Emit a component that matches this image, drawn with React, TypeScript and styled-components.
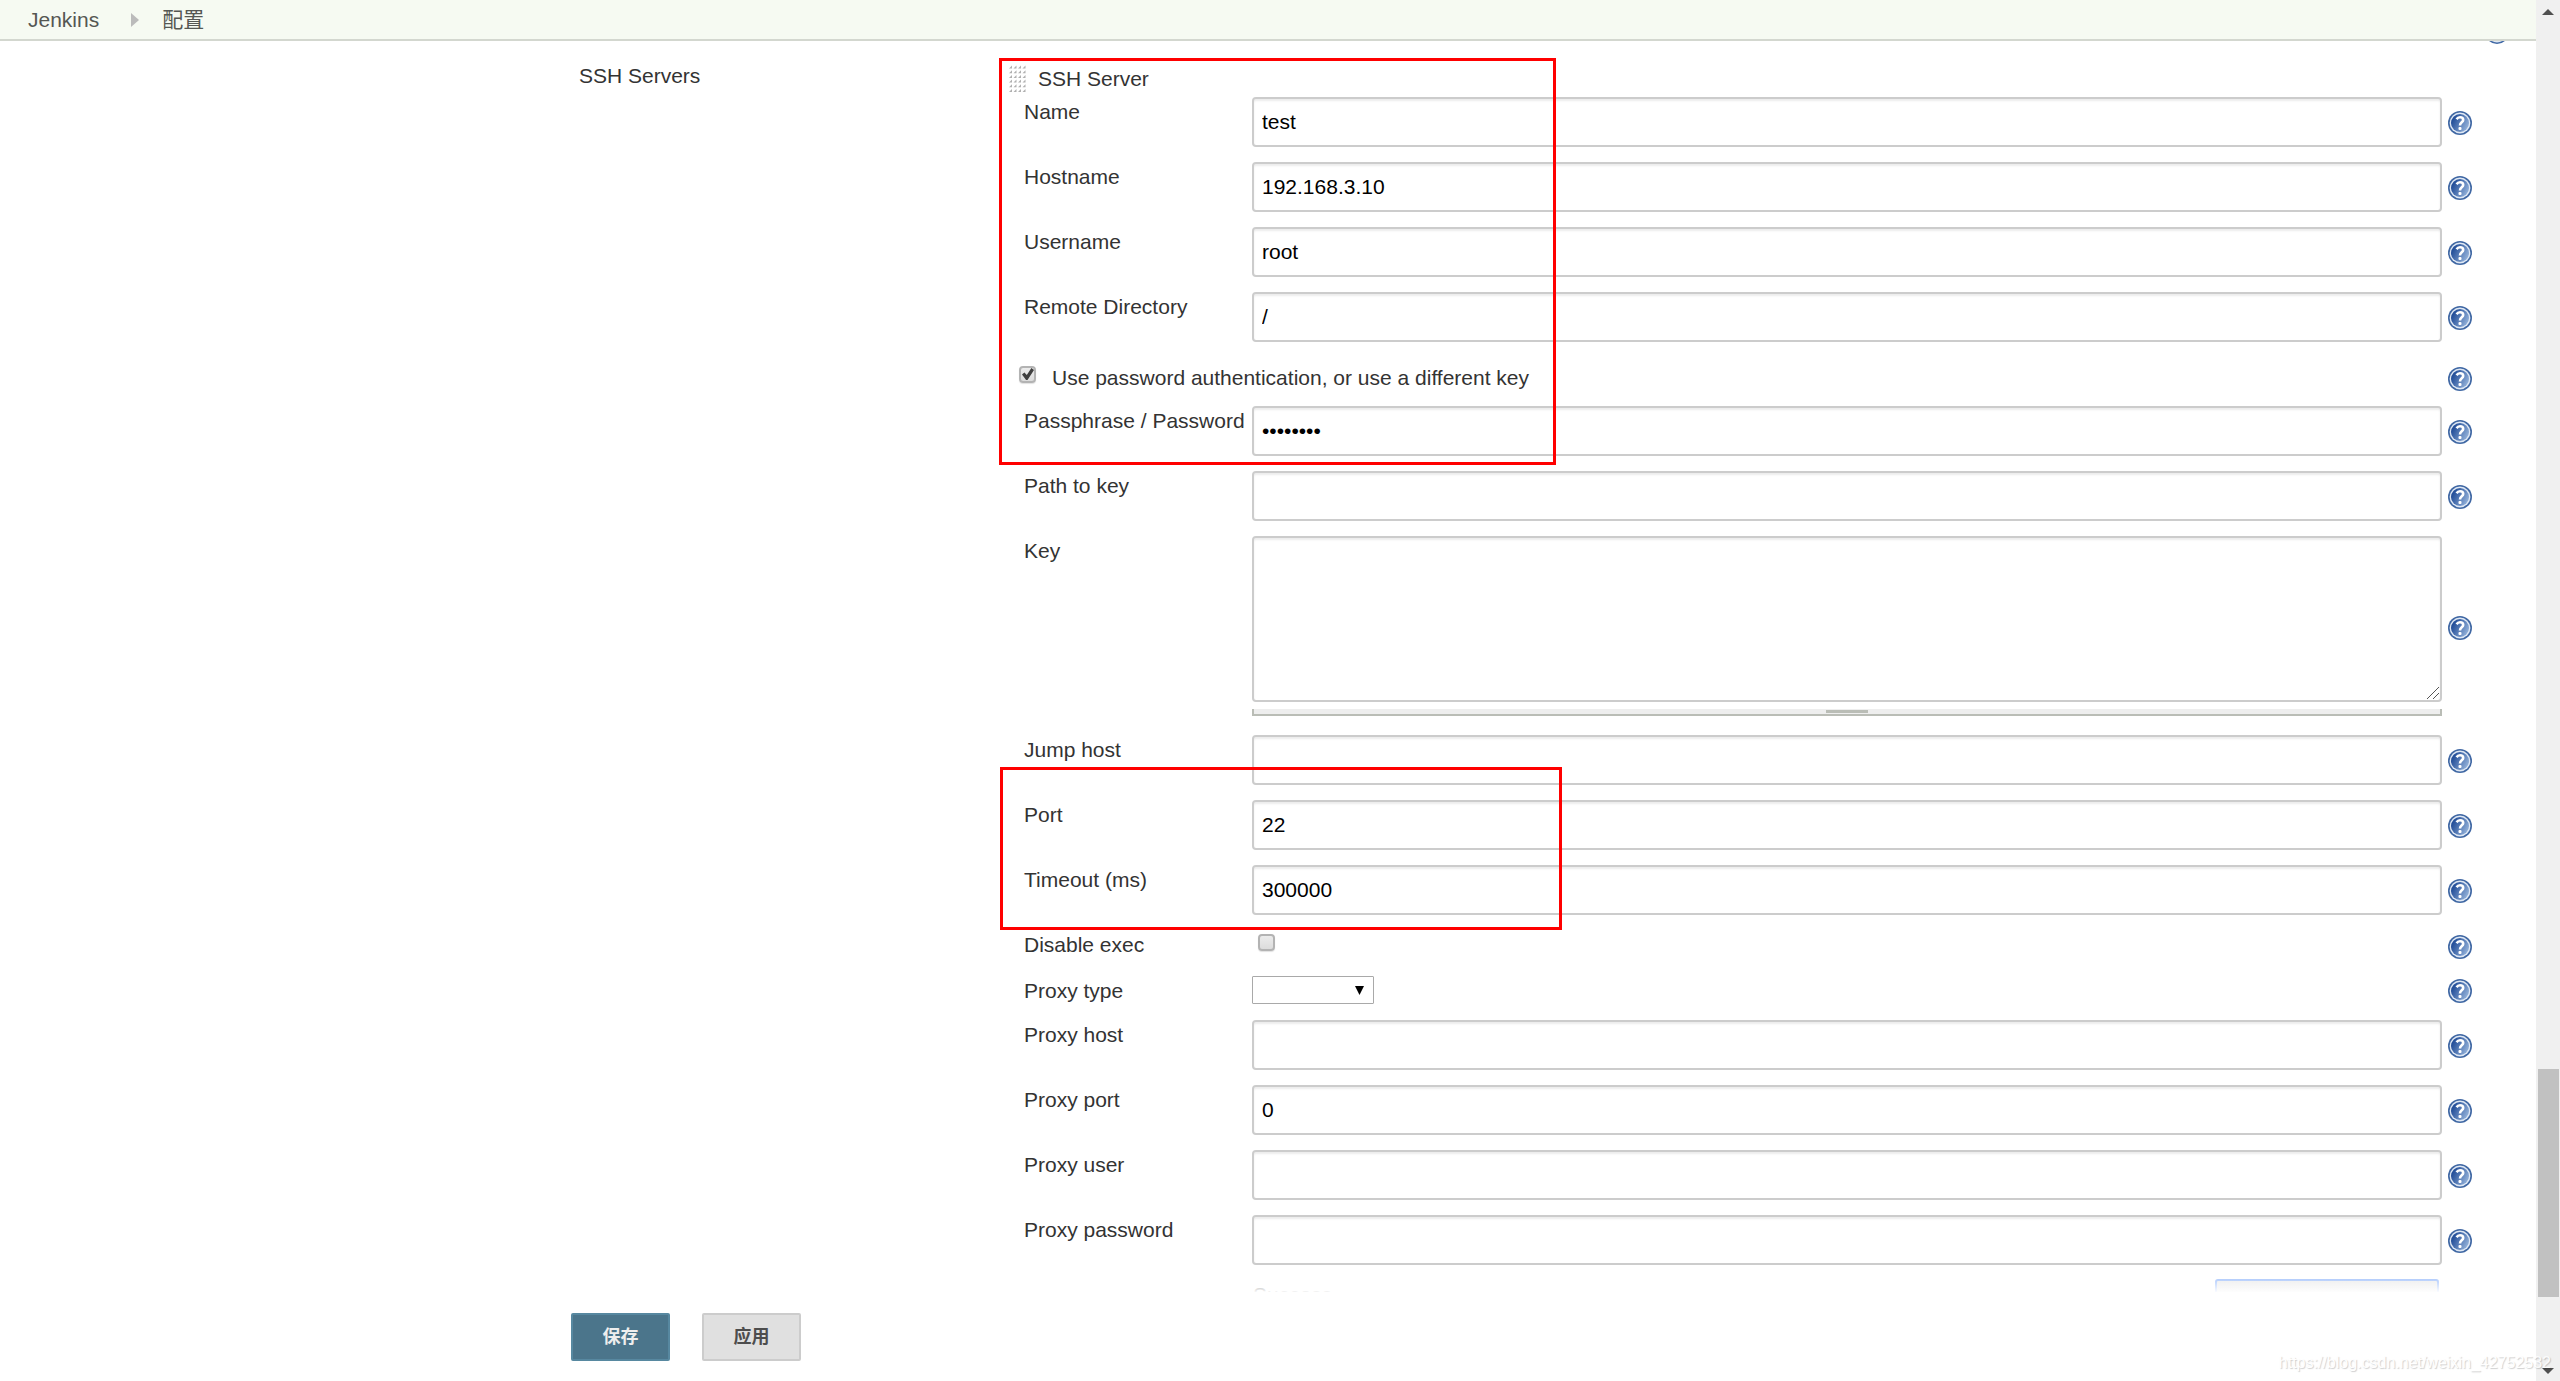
import React, { useId } from "react";
import styled, { createGlobalStyle } from "styled-components";

const GlobalStyle = createGlobalStyle`
  *, *::before, *::after { box-sizing: border-box; }
  html, body { margin: 0; background: #fff; }
  body, input, textarea, select, button {
    font-family: "Liberation Sans", Arial, "Noto Sans CJK SC", sans-serif;
    font-size: 21px;
    line-height: 24px;
  }
  body { color: #333; overflow: hidden; }
`;

const Shell = styled.div`
  position: relative;
  display: grid;
  grid-template-columns: minmax(0, 1fr) 24px;
  height: 100vh;
`;

const Page = styled.div`
  display: flex;
  flex-direction: column;
  min-height: 0;
`;

const Breadcrumbs = styled.nav`
  display: flex;
  align-items: center;
  height: 41px;
  flex: none;
  padding: 1px 28px 0;
  background: #f6faf2;
  border-bottom: 2px solid #d3d7cf;
`;

const Crumb = styled.a`
  color: #555753;
  text-decoration: none;
`;

const CrumbArrow = styled.svg`
  width: 8px;
  height: 14px;
  margin: 0 23px 0 32px;
  fill: #bbb;
`;

const Main = styled.main`
  flex: 1;
  min-height: 0;
  overflow-y: auto;
  scrollbar-width: none;
`;

const ClippedHelp = styled.div`
  display: flex;
  justify-content: flex-end;
  align-items: flex-end;
  height: 3px;
  padding-right: 27px;
  overflow: hidden;
`;

const Section = styled.section`
  display: grid;
  grid-template-columns: 420px minmax(0, 1fr);
  padding: 14px 64px 0 579px;
`;

const SectionTitle = styled.div`
  padding-top: 6px;
`;

const ServerForm = styled.form`
  position: relative;
  padding-left: 25px;
`;

const ServerHead = styled.div`
  display: flex;
  align-items: center;
  gap: 12px;
  height: 39px;
  margin-left: -15px;
  padding-top: 2px;
`;

const DragHandle = styled.svg`
  width: 17px;
  height: 28px;
`;

const Row = styled.div<{ $gap?: number }>`
  display: grid;
  grid-template-columns: 228px minmax(0, 1fr) 24px;
  padding-bottom: ${(p) => p.$gap ?? 15}px;
`;

const Label = styled.label`
  padding: 3px 0 0 0;
  white-space: nowrap;
`;

const Cell = styled.div`
  display: flex;
  flex-direction: column;
  align-items: flex-start;
  margin-right: 6px;
`;

const HelpLink = styled.a`
  align-self: center;
  height: 24px;
  margin-top: 2px;
`;

const HelpSvg = styled.svg`
  display: block;
  width: 24px;
  height: 24px;
`;

const TextInput = styled.input`
  width: 100%;
  height: 50px;
  padding: 0 8px;
  color: #000;
  background: #fff;
  border: 2px solid #ccc;
  border-radius: 4px;
  box-shadow: inset 0 2px 2px rgba(0, 0, 0, 0.075);
  outline: 0;
`;

const KeyArea = styled.textarea`
  display: block;
  width: 100%;
  height: 166px;
  padding: 8px;
  background: #fff;
  border: 2px solid #ccc;
  border-radius: 4px;
  box-shadow: inset 0 2px 2px rgba(0, 0, 0, 0.075);
  outline: 0;
  resize: none;
`;

const AreaWrap = styled.div`
  position: relative;
  width: 100%;
`;

const Resizer = styled.svg`
  position: absolute;
  right: 3px;
  bottom: 3px;
  width: 12px;
  height: 12px;
  stroke: #555;
`;

const GripBar = styled.div`
  display: flex;
  justify-content: center;
  width: 100%;
  height: 7px;
  margin: 7px 0 2px;
  background: #eee;
  border: solid #babdb6;
  border-width: 0 2px 2px;
`;

const GripMark = styled.span`
  width: 42px;
  height: 3px;
  margin-top: 1px;
  background: #babdb6;
`;

const Check = styled.input`
  appearance: none;
  position: relative;
  flex: none;
  width: 17px;
  height: 17px;
  margin: 0;
  border: 2px solid #b3b3b3;
  border-radius: 4px;
  background: linear-gradient(#ececec, #dcdcdc);
  box-shadow: 0 1px 1px rgba(0, 0, 0, 0.12);

  &:checked::after {
    content: "";
    position: absolute;
    inset: 0 0 1px 1px;
    background: #3f3f3f;
    clip-path: polygon(0 55%, 20% 38%, 40% 58%, 78% 0, 100% 16%, 46% 100%, 34% 100%);
  }
`;

const AuthRow = styled.div`
  display: grid;
  grid-template-columns: minmax(0, 1fr) 24px;
  align-items: start;
  height: 49px;
  margin-left: -5px;
  padding: 8px 0 15px;
`;

const AuthLabel = styled.label`
  display: flex;
  align-items: center;
  gap: 16px;
  height: 24px;
  margin-top: 1px;

  ${Check} {
    align-self: flex-start;
  }
`;

const BareCheckCell = styled(Cell)`
  padding: 4px 0 0 6px;
  height: 31px;
`;

const SelectWrap = styled.div`
  position: relative;
  width: 122px;
  height: 28px;
`;

const Select = styled.select`
  appearance: none;
  width: 100%;
  height: 28px;
  padding: 0 24px 0 6px;
  background: #fff;
  border: 1px solid #a9a9a9;
  border-radius: 1px;
`;

const SelectArrow = styled.svg`
  position: absolute;
  right: 10px;
  top: 10px;
  width: 9px;
  height: 9px;
  pointer-events: none;
`;

const TestRow = styled.div`
  display: flex;
  justify-content: space-between;
  padding: 0 33px 0 229px;
`;

const TestStatus = styled.span`
  padding-top: 3px;
  color: #555;
`;

const TestButton = styled.button`
  width: 224px;
  height: 42px;
  margin-top: -1px;
  color: #333;
  background: linear-gradient(#e8e8e8, #ddd);
  border: 2px solid #8fb5fb;
  border-radius: 3px;
`;

const Highlight = styled.div<{ $top: number; $left: number; $width: number; $height: number }>`
  position: absolute;
  top: ${(p) => p.$top}px;
  left: ${(p) => p.$left}px;
  width: ${(p) => p.$width}px;
  height: ${(p) => p.$height}px;
  border: 3px solid #f00;
  pointer-events: none;
`;

const Footer = styled.footer`
  position: relative;
  display: flex;
  flex: none;
  gap: 32px;
  height: 89px;
  padding: 21px 0 0 571px;
  background: #fff;

  &::before {
    content: "";
    position: absolute;
    left: 0;
    right: 0;
    bottom: 100%;
    height: 20px;
    background: linear-gradient(rgba(255, 255, 255, 0), rgba(255, 255, 255, 0.95));
    pointer-events: none;
  }
`;

const FooterButton = styled.button<{ $primary?: boolean }>`
  width: 99px;
  height: 48px;
  padding: 0;
  font-size: 18px;
  font-weight: 700;
  color: ${(p) => (p.$primary ? "#eee" : "#4d4d4d")};
  background: ${(p) => (p.$primary ? "#4b758b" : "#e0e0e0")};
  border: 2px solid ${(p) => (p.$primary ? "#5788a0" : "#ccc")};
  border-radius: 2px;
`;

const ScrollTrack = styled.aside`
  display: grid;
  grid-template-rows: 24px 1045fr 228fr 64fr 20px;
  justify-items: center;
  align-items: center;
  background: #f0f0f0;
`;

const ScrollThumb = styled.div`
  grid-row: 3;
  width: 21px;
  height: 100%;
  background: #c1c1c1;
`;

const ScrollArrow = styled.svg<{ $row: number }>`
  grid-row: ${(p) => p.$row};
  width: 12px;
  height: 6px;
  fill: #505050;
`;

const Watermark = styled.div`
  position: absolute;
  right: 9px;
  bottom: 6px;
  font-size: 16px;
  color: #fff;
  text-shadow: 1px 1px 1px rgba(0, 0, 0, 0.25);
  opacity: 0.75;
`;

function HelpIcon() {
  const id = useId();
  return (
    <HelpSvg viewBox="0 0 24 24" aria-hidden="true">
      <defs>
        <linearGradient id={id} x1="0" y1="0.3" x2="1" y2="0.8">
          <stop offset="0.1" stopColor="#25509a" />
          <stop offset="0.95" stopColor="#94b2da" />
        </linearGradient>
      </defs>
      <circle cx="12" cy="12" r="12" fill="#4068a4" />
      <circle cx="12" cy="12" r="10.4" fill="#dfe8f4" />
      <circle cx="12" cy="12" r="9" fill={`url(#${id})`} />
      <path
        d="M8.600 8.200C9.400 6.900 10.600 6.300 12 6.300c2 0 3.200 1 3.200 2.600 0 2.300-3.200 2.600-3.200 5.500"
        fill="none"
        stroke="#fff"
        strokeWidth="2.6"
      />
      <rect x="10.500" y="16" width="3" height="3" rx="1" fill="#fff" />
    </HelpSvg>
  );
}

function Help({ topic }: { topic: string }) {
  return (
    <HelpLink href="#help" aria-label={`Help for feature: ${topic}`}>
      <HelpIcon />
    </HelpLink>
  );
}

function Field({ label, value = "", type = "text" }: { label: string; value?: string; type?: string }) {
  const id = useId();
  return (
    <Row>
      <Label htmlFor={id}>{label}</Label>
      <Cell>
        <TextInput id={id} type={type} defaultValue={value} autoComplete="off" />
      </Cell>
      <Help topic={label} />
    </Row>
  );
}

const dots = Array.from({ length: 24 }, (_, i) => ({ x: (i % 4) * 4.5, y: Math.floor(i / 4) * 4.7 }));

export default function App() {
  return (
    <>
      <GlobalStyle />
      <Shell>
        <Page>
          <Breadcrumbs>
            <Crumb href="#jenkins">Jenkins</Crumb>
            <CrumbArrow viewBox="0 0 8 14" aria-hidden="true">
              <path d="M0 0l8 7-8 7z" />
            </CrumbArrow>
            <Crumb href="#configure">配置</Crumb>
          </Breadcrumbs>
          <Main>
            <ClippedHelp>
              <HelpIcon />
            </ClippedHelp>
            <Section>
              <SectionTitle>SSH Servers</SectionTitle>
              <ServerForm>
                <ServerHead>
                  <DragHandle viewBox="0 0 17 28" aria-hidden="true">
                    {dots.map((d, i) => (
                      <path key={i} d={`M${d.x + 3} ${d.y + 0.5}v3h-3z`} fill="#b0b0b0" />
                    ))}
                  </DragHandle>
                  SSH Server
                </ServerHead>
                <Field label="Name" value="test" />
                <Field label="Hostname" value="192.168.3.10" />
                <Field label="Username" value="root" />
                <Field label="Remote Directory" value="/" />
                <AuthRow>
                  <AuthLabel>
                    <Check type="checkbox" defaultChecked />
                    Use password authentication, or use a different key
                  </AuthLabel>
                  <Help topic="password authentication" />
                </AuthRow>
                <Field label="Passphrase / Password" value="password" type="password" />
                <Field label="Path to key" />
                <Row $gap={17}>
                  <Label htmlFor="key">Key</Label>
                  <Cell>
                    <AreaWrap>
                      <KeyArea id="key" />
                      <Resizer viewBox="0 0 12 12" aria-hidden="true">
                        <path d="M0 12L12 0M6 12l6-6" fill="none" />
                      </Resizer>
                    </AreaWrap>
                    <GripBar>
                      <GripMark />
                    </GripBar>
                  </Cell>
                  <Help topic="Key" />
                </Row>
                <Field label="Jump host" />
                <Field label="Port" value="22" />
                <Field label="Timeout (ms)" value="300000" />
                <Row>
                  <Label htmlFor="exec">Disable exec</Label>
                  <BareCheckCell>
                    <Check id="exec" type="checkbox" />
                  </BareCheckCell>
                  <Help topic="Disable exec" />
                </Row>
                <Row $gap={16}>
                  <Label htmlFor="proxy">Proxy type</Label>
                  <Cell>
                    <SelectWrap>
                      <Select id="proxy">
                        <option value="" />
                      </Select>
                      <SelectArrow viewBox="0 0 9 9" aria-hidden="true">
                        <path d="M0 0h9L4.500 9z" />
                      </SelectArrow>
                    </SelectWrap>
                  </Cell>
                  <Help topic="Proxy type" />
                </Row>
                <Field label="Proxy host" />
                <Field label="Proxy port" value="0" />
                <Field label="Proxy user" />
                <Field label="Proxy password" type="password" />
                <TestRow>
                  <TestStatus>Success</TestStatus>
                  <TestButton type="button" aria-label="Test Configuration" />
                </TestRow>
                <Highlight $top={0} $left={0} $width={557} $height={407} />
                <Highlight $top={709} $left={1} $width={562} $height={163} />
              </ServerForm>
            </Section>
          </Main>
          <Footer>
            <FooterButton type="button" $primary>保存</FooterButton>
            <FooterButton type="button">应用</FooterButton>
          </Footer>
        </Page>
        <ScrollTrack aria-hidden="true">
          <ScrollArrow $row={1} viewBox="0 0 12 6">
            <path d="M0 6l6-6 6 6z" />
          </ScrollArrow>
          <ScrollThumb />
          <ScrollArrow $row={5} viewBox="0 0 12 6">
            <path d="M0 0l6 6 6-6z" />
          </ScrollArrow>
        </ScrollTrack>
        <Watermark>https://blog.csdn.net/weixin_42752532</Watermark>
      </Shell>
    </>
  );
}
